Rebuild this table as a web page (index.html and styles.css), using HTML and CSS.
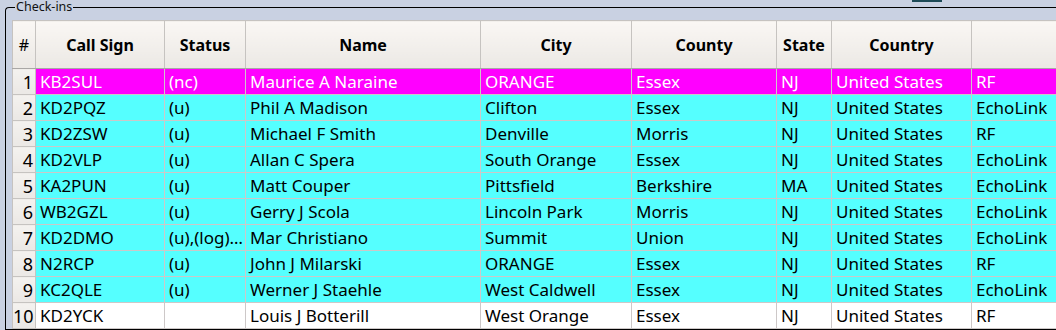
FILE: index.html
```html
<!DOCTYPE html>
<html lang="en">
<head>
    <meta charset="UTF-8">
    <title>Check-ins</title>
    <link rel="stylesheet" href="styles.css">
</head>
<body>
    <div class="top-tab"></div>

    <fieldset class="group">
        <legend>Check-ins</legend>

        <table class="checkins">
            <colgroup>
                <col style="width:23px">
                <col style="width:129px">
                <col style="width:81px">
                <col style="width:235px">
                <col style="width:151px">
                <col style="width:145px">
                <col style="width:55px">
                <col style="width:140px">
                <col style="width:110px">
            </colgroup>
            <thead>
                <tr>
                    <th class="num">#</th>
                    <th>Call Sign</th>
                    <th>Status</th>
                    <th>Name</th>
                    <th>City</th>
                    <th>County</th>
                    <th>State</th>
                    <th>Country</th>
                    <th></th>
                </tr>
            </thead>
            <tbody>
                <tr class="not-checked">
                    <td class="num">1</td><td>KB2SUL</td><td>(nc)</td><td>Maurice A Naraine</td><td>ORANGE</td><td>Essex</td><td>NJ</td><td>United States</td><td>RF</td>
                </tr>
                <tr class="unverified">
                    <td class="num">2</td><td>KD2PQZ</td><td>(u)</td><td>Phil A Madison</td><td>Clifton</td><td>Essex</td><td>NJ</td><td>United States</td><td>EchoLink</td>
                </tr>
                <tr class="unverified">
                    <td class="num">3</td><td>KD2ZSW</td><td>(u)</td><td>Michael F Smith</td><td>Denville</td><td>Morris</td><td>NJ</td><td>United States</td><td>RF</td>
                </tr>
                <tr class="unverified">
                    <td class="num">4</td><td>KD2VLP</td><td>(u)</td><td>Allan C Spera</td><td>South Orange</td><td>Essex</td><td>NJ</td><td>United States</td><td>EchoLink</td>
                </tr>
                <tr class="unverified">
                    <td class="num">5</td><td>KA2PUN</td><td>(u)</td><td>Matt Couper</td><td>Pittsfield</td><td>Berkshire</td><td>MA</td><td>United States</td><td>EchoLink</td>
                </tr>
                <tr class="unverified">
                    <td class="num">6</td><td>WB2GZL</td><td>(u)</td><td>Gerry J Scola</td><td>Lincoln Park</td><td>Morris</td><td>NJ</td><td>United States</td><td>EchoLink</td>
                </tr>
                <tr class="unverified">
                    <td class="num">7</td><td>KD2DMO</td><td>(u),(log)…</td><td>Mar Christiano</td><td>Summit</td><td>Union</td><td>NJ</td><td>United States</td><td>EchoLink</td>
                </tr>
                <tr class="unverified">
                    <td class="num">8</td><td>N2RCP</td><td>(u)</td><td>John J Milarski</td><td>ORANGE</td><td>Essex</td><td>NJ</td><td>United States</td><td>RF</td>
                </tr>
                <tr class="unverified">
                    <td class="num">9</td><td>KC2QLE</td><td>(u)</td><td>Werner J Staehle</td><td>West Caldwell</td><td>Essex</td><td>NJ</td><td>United States</td><td>EchoLink</td>
                </tr>
                <tr>
                    <td class="num">10</td><td>KD2YCK</td><td></td><td>Louis J Botterill</td><td>West Orange</td><td>Essex</td><td>NJ</td><td>United States</td><td>RF</td>
                </tr>
            </tbody>
        </table>
    </fieldset>
</body>
</html>
```

FILE: styles.css
```css
:root {
    --window: #c9d1e2;
    --grid: #cdc8c8;
    --magenta: #ff00ff;
    --cyan: #55ffff;
}

* {
    box-sizing: border-box;
}

html, body {
    margin: 0;
    padding: 0;
    overflow: hidden;
}

body {
    background-color: var(--window);
    font-family: 'Noto Sans', 'DejaVu Sans', sans-serif;
    color: #000;
    position: relative;
    height: 330px;
}

/* edge of the widget above, mostly scrolled out */
.top-tab {
    position: absolute;
    left: 912px;
    top: 0;
    width: 30px;
    height: 2px;
    background-color: #1d4a57;
}

.group {
    margin: 0 0 0 5px;
    padding: 6px 0 0 6px;
    border: 1px solid #000;
    border-right: none;
    border-radius: 4px 0 0 0;
    width: 1200px;
    min-width: 0;
}

.group legend {
    font-size: 12.5px;
    line-height: 14px;
    padding: 0 1px;
    margin-left: 3px;
    color: #111;
}

.checkins {
    border-collapse: collapse;
    table-layout: fixed;
    width: 1069px;
    background-color: #fff;
    font-size: 17px;
}

.checkins th {
    height: 48px;
    padding: 0 4px;
    font-size: 16px;
    font-weight: 700;
    text-align: center;
    white-space: nowrap;
    background: linear-gradient(#faf7f4, #ebe8e4);
    border: 1px solid #c6c3c0;
    border-bottom: 1px solid #a9a7a5;
}

.checkins th.num {
    font-weight: 400;
    padding: 0;
}

.checkins td {
    height: 26px;
    padding: 0 4px;
    text-align: left;
    white-space: nowrap;
    overflow: hidden;
    border: 1px solid var(--grid);
    line-height: 24px;
}

.checkins td.num {
    text-align: right;
    padding: 0 2px 0 0;
    font-size: 18px;
    border-color: #c6c3c0;
}

.checkins tr.not-checked td {
    background-color: var(--magenta);
    color: #fff;
}

.checkins tr.unverified td {
    background-color: var(--cyan);
}

.checkins tr td.num {
    background: linear-gradient(#f4f2ef, #ebe8e5);
    color: #000;
}
```
